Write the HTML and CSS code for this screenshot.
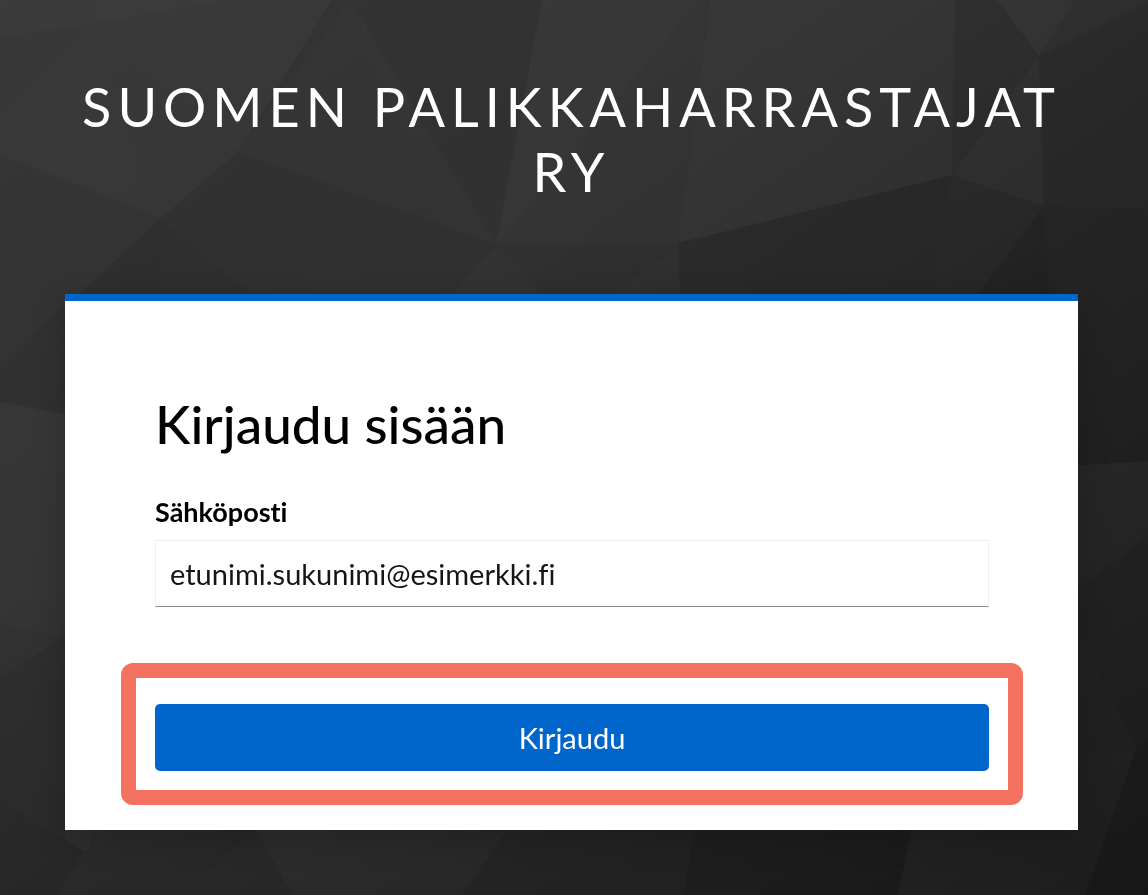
FILE: index.html
```
<!DOCTYPE html>
<html lang="fi">
<head>
<meta charset="utf-8">
<meta name="viewport" content="width=device-width, initial-scale=1">
<title>Kirjaudu sisään</title>
<link rel="stylesheet" href="styles.css">
</head>
<body>

<svg class="background" viewBox="0 0 1148 895" preserveAspectRatio="xMidYMid slice" aria-hidden="true">
	<!-- light facets -->
	<g fill="#fff">
		<path opacity=".015" d="M0 0H234L92 24L0 37Z"/>
		<path opacity=".01" d="M94 0H234L92 24Z"/>
		<path opacity=".01" d="M0 117L92 24L161 218L0 155Z"/>
		<path opacity=".006" d="M92 24L161 218L238 152Z"/>
		<path opacity=".01" d="M92 24L234 0H332L238 152Z"/>
		<path opacity=".014" d="M238 152L350 0L496 245Z"/>
		<path opacity=".014" d="M542 0H700L496 245Z"/>
		<path opacity=".008" d="M700 0H710L678 243H496Z"/>
		<path opacity=".015" d="M710 0H955L952 175L678 243Z"/>
		<path opacity=".02" d="M997 0H1075L1039 56Z"/>
		<path opacity=".012" d="M1039 56L1044 206L952 175Z"/>
		<path opacity=".01" d="M161 218L80 294L0 365V155Z"/>
		<path opacity=".015" d="M496 245L452 294H315L238 152Z"/>
		<path opacity=".01" d="M496 245H678L612 294H545Z"/>
		<path opacity=".01" d="M0 402L90 418V644L0 624Z"/>
		<path opacity=".01" d="M0 676L90 628V855L0 799Z"/>
		<path opacity=".015" d="M1044 206L1148 209V461L1060 466Z"/>
		<path opacity=".015" d="M1060 466L1148 461V536L1060 602Z"/>
		<path opacity=".01" d="M1060 598L1137 747L1060 759Z"/>
		<path opacity=".015" d="M1137 747L1085 895H898L912 820L1060 759Z"/>
		<path opacity=".02" d="M255 829H508L462 895H293Z"/>
		<path opacity=".015" d="M508 829H694L684 895H462Z"/>
		<path opacity=".01" d="M252 829L178 895H58L84 851Z"/>
	</g>
	<!-- dark facets -->
	<g fill="#000">
		<path opacity=".05" d="M332 0H350L440 225L238 152Z"/>
		<path opacity=".04" d="M350 0H542L496 245L440 225Z"/>
		<path opacity=".06" d="M0 155L161 218L80 294L0 365Z"/>
		<path opacity=".1" d="M238 152L496 245L452 294H315Z"/>
		<path opacity=".07" d="M238 152L315 294H250L161 218Z"/>
		<path opacity=".1" d="M161 218L250 294H80Z"/>
		<path opacity=".03" d="M161 218L165 294H80Z"/>
		<path opacity=".07" d="M496 245H678L612 294H545Z"/>
		<path opacity=".09" d="M678 243L952 175L930 294H680Z"/>
		<path opacity=".05" d="M952 175L1044 206L978 294H930Z"/>
		<path opacity=".04" d="M955 0H997L1039 56L952 175Z"/>
		<path opacity=".07" d="M1148 3L1039 56L1044 206L1148 209Z"/>
		<path opacity=".16" d="M1044 206L1148 209V461L1078 465L1055 294H978Z"/>
		<path opacity=".06" d="M0 365L65 306V414L0 402Z"/>
		<path opacity=".08" d="M0 676L65 638V838L0 799Z"/>
		<path opacity=".08" d="M0 799L84 851L58 895H0Z"/>
		<path opacity=".05" d="M84 851L245 829H255L178 895H58Z"/>
		<path opacity=".05" d="M508 829H694L684 895H462Z"/>
		<path opacity=".08" d="M694 829H912L898 895H684Z"/>
		<path opacity=".06" d="M1137 747L1148 740V895H1085Z"/>
	</g>
</svg>

<div class="login">
	<header>
		<h1 class="realm">Suomen Palikkaharrastajat ry</h1>
	</header>

	<main class="card">
		<form>
			<div class="fields">
				<h2 class="title">Kirjaudu sisään</h2>
				<label class="label" for="username">Sähköposti</label>
				<input class="input" id="username" name="username" type="text" value="etunimi.sukunimi@esimerkki.fi">
			</div>
			<div class="highlight">
				<button class="button" type="submit">Kirjaudu</button>
			</div>
		</form>
	</main>
</div>

</body>
</html>
```
FILE: styles.css
```
* {
	box-sizing: border-box;
}

body {
	margin: 0;
	min-height: 100vh;
	background: linear-gradient(145deg, #383838 0%, #333 35%, #252525 68%, #191919 100%) fixed;
	font-family: Lato, "Open Sans", sans-serif;
	font-variant-ligatures: none;
	color: #000;
}

.background {
	position: fixed;
	top: 0;
	left: 0;
	width: 100%;
	height: 100%;
	z-index: -1;
}

.login {
	padding: 74px 70px 65px 65px;
}

.realm {
	margin: 0;
	padding-bottom: 90px;
	color: #fff;
	font-size: 54px;
	font-weight: 400;
	line-height: 65px;
	letter-spacing: 6px;
	text-align: center;
	text-transform: uppercase;
}

.card {
	padding: 90px 55px 25px 56px;
	background: #fff;
	border-top: 7px solid #06c;
	box-shadow: 0 8px 30px rgba(0, 0, 0, 0.2);
}

.fields {
	padding: 0 34px;
}

.title {
	margin: 0 0 38px;
	font-size: 53px;
	font-weight: 500;
	line-height: 65px;
}

.label {
	display: block;
	margin-bottom: 10px;
	font-size: 27px;
	font-weight: 700;
	line-height: 36px;
}

.input {
	display: block;
	width: 100%;
	height: 67px;
	padding: 0 14px;
	border: 1px solid #f0f0f0;
	border-bottom-color: #8a8d90;
	border-radius: 0;
	background: #fff;
	color: #151515;
	font-family: inherit;
	font-size: 29px;
	font-variant-ligatures: inherit;
}

/* frame around the submit button */
.highlight {
	margin-top: 56px;
	padding: 26px 19px 19px;
	border: 15px solid #f2715f;
	border-radius: 12px;
}

.button {
	display: block;
	width: 100%;
	height: 67px;
	padding: 0;
	border: 0;
	border-radius: 5px;
	background: #06c;
	color: #fff;
	font-family: inherit;
	font-size: 29px;
	cursor: pointer;
}

.button:hover {
	background: #004080;
}
```
